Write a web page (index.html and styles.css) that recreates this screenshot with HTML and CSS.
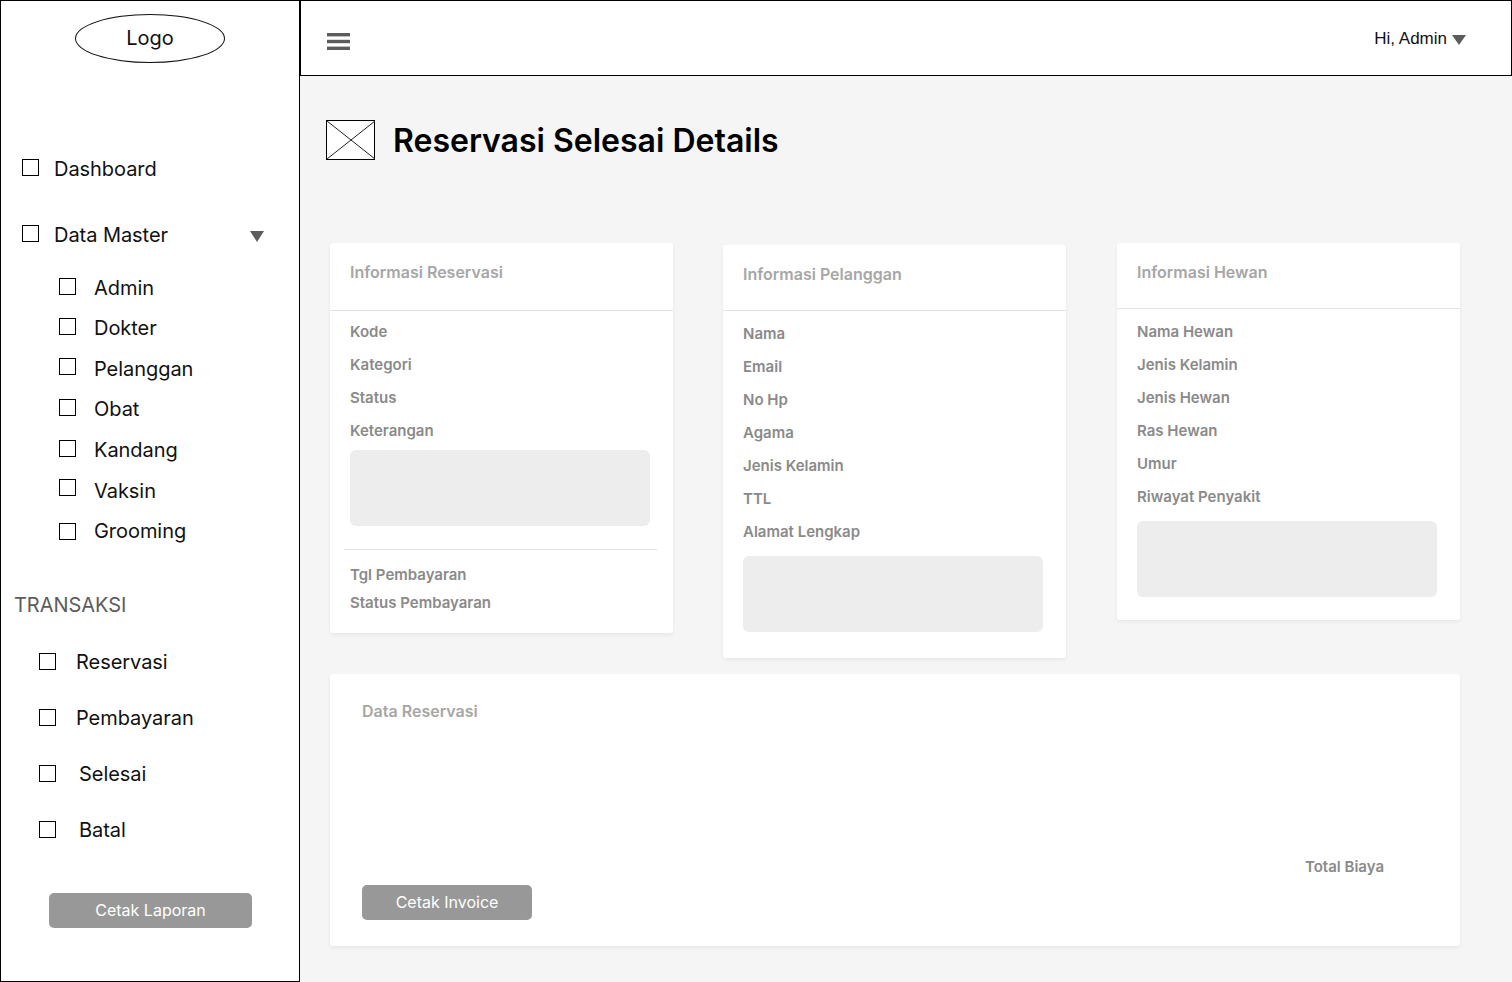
FILE: index.html
```html
<!DOCTYPE html>
<html lang="en">

<head>
    <meta charset="UTF-8">
    <meta name="viewport" content="width=device-width, initial-scale=1.0">
    <title>Reservasi Selesai Details</title>
    <link rel="stylesheet" href="styles.css">
</head>

<body>
    <div class="app">
        <aside class="sidebar">
            <div class="logo">Logo</div>

            <div class="nav-main">
                <div class="nav-row"><span class="box"></span>Dashboard</div>
                <div class="nav-row nav-row-master">
                    <span class="box"></span>Data Master
                    <svg class="caret caret-side" width="14" height="11" viewBox="0 0 14 11"><polygon points="0,0 14,0 7,11" /></svg>
                </div>
            </div>

            <div class="nav-sub">
                <div class="sub-row"><span class="box"></span>Admin</div>
                <div class="sub-row"><span class="box"></span>Dokter</div>
                <div class="sub-row"><span class="box box-up"></span>Pelanggan</div>
                <div class="sub-row"><span class="box"></span>Obat</div>
                <div class="sub-row"><span class="box"></span>Kandang</div>
                <div class="sub-row sub-row-low"><span class="box box-up"></span>Vaksin</div>
                <div class="sub-row"><span class="box box-down"></span>Grooming</div>
            </div>

            <div class="nav-title">TRANSAKSI</div>

            <div class="nav-trans">
                <div class="trans-row"><span class="box"></span>Reservasi</div>
                <div class="trans-row"><span class="box"></span>Pembayaran</div>
                <div class="trans-row trans-row-wide"><span class="box"></span>Selesai</div>
                <div class="trans-row trans-row-wide"><span class="box"></span>Batal</div>
            </div>

            <button class="btn btn-side" type="button">Cetak Laporan</button>
        </aside>

        <div class="content">
            <header class="topbar">
                <svg class="burger" width="23" height="17" viewBox="0 0 23 17">
                    <rect x="0" y="0" width="23" height="3.4" />
                    <rect x="0" y="6.8" width="23" height="3.4" />
                    <rect x="0" y="13.6" width="23" height="3.4" />
                </svg>
                <div class="user">
                    <span>Hi, Admin</span>
                    <svg class="caret" width="14" height="10" viewBox="0 0 14 10"><polygon points="0,0 14,0 7,10" /></svg>
                </div>
            </header>

            <main class="page">
                <div class="page-head">
                    <svg class="placeholder-icon" width="50" height="40" viewBox="0 0 50 40">
                        <rect x="0.5" y="0.5" width="48" height="39" fill="#fff" stroke="#000" />
                        <path d="M1 1 L49 39 M49 1 L1 39" stroke="#222" stroke-width="1" fill="none" />
                    </svg>
                    <h1>Reservasi Selesai Details</h1>
                </div>

                <div class="cards">
                    <section class="card card-reservasi">
                        <h2 class="card-title">Informasi Reservasi</h2>
                        <div class="card-body">
                            <div class="field">Kode</div>
                            <div class="field">Kategori</div>
                            <div class="field">Status</div>
                            <div class="field">Keterangan</div>
                            <div class="textarea"></div>
                            <div class="divider"></div>
                            <div class="field field-small">Tgl Pembayaran</div>
                            <div class="field field-small">Status Pembayaran</div>
                        </div>
                    </section>

                    <section class="card card-pelanggan">
                        <h2 class="card-title">Informasi Pelanggan</h2>
                        <div class="card-body">
                            <div class="field">Nama</div>
                            <div class="field">Email</div>
                            <div class="field">No Hp</div>
                            <div class="field">Agama</div>
                            <div class="field">Jenis Kelamin</div>
                            <div class="field">TTL</div>
                            <div class="field">Alamat Lengkap</div>
                            <div class="textarea"></div>
                        </div>
                    </section>

                    <section class="card card-hewan">
                        <h2 class="card-title">Informasi Hewan</h2>
                        <div class="card-body">
                            <div class="field">Nama Hewan</div>
                            <div class="field">Jenis Kelamin</div>
                            <div class="field">Jenis Hewan</div>
                            <div class="field">Ras Hewan</div>
                            <div class="field">Umur</div>
                            <div class="field">Riwayat Penyakit</div>
                            <div class="textarea"></div>
                        </div>
                    </section>
                </div>

                <section class="card-wide">
                    <h2 class="wide-title">Data Reservasi</h2>
                    <div class="total">Total Biaya</div>
                    <button class="btn btn-invoice" type="button">Cetak Invoice</button>
                </section>
            </main>
        </div>
    </div>
</body>

</html>
```

FILE: styles.css
```css
* {
    box-sizing: border-box;
}

body {
    margin: 0;
    font-family: Inter, "Noto Sans", sans-serif;
    color: #111;
    background-color: #f5f5f5;
}

.app {
    display: flex;
    width: 1512px;
    height: 982px;
    overflow: hidden;
}

/* sidebar */
.sidebar {
    width: 300px;
    height: 982px;
    flex-shrink: 0;
    background-color: #fff;
    border: 1px solid #000;
    font-size: 20px;
    letter-spacing: -0.05px;
}

.logo {
    display: flex;
    align-items: center;
    justify-content: center;
    width: 150px;
    height: 49px;
    margin: 13px 0 0 74px;
    padding-bottom: 2px;
    border: 1px solid #111;
    border-radius: 50%;
}

.box {
    display: block;
    flex-shrink: 0;
    width: 17px;
    height: 17px;
    margin-top: 10px;
    border: 1.3px solid #000;
}

.nav-main {
    margin-top: 86px;
}

.nav-row {
    display: flex;
    gap: 15px;
    height: 40px;
    padding-left: 21px;
    line-height: 40px;
}

.nav-row-master {
    margin-top: 26px;
}

.caret {
    display: block;
    fill: #5c5c5c;
}

.caret-side {
    margin: 16px 35px 0 auto;
}

.nav-sub {
    margin-top: 12.75px;
}

.sub-row {
    display: flex;
    gap: 18px;
    height: 40.5px;
    padding-left: 58px;
    line-height: 40.5px;
}

.sub-row-low {
    line-height: 42px;
}

.box-up {
    margin-top: 9px;
}

.box-down {
    margin-top: 12px;
}

.nav-title {
    margin: 42px 0 0 13px;
    line-height: 24px;
    color: #5c5c5c;
}

.nav-trans {
    display: flex;
    flex-direction: column;
    gap: 16px;
    margin-top: 25px;
}

.trans-row {
    display: flex;
    gap: 20px;
    height: 40px;
    padding-left: 38px;
    line-height: 40px;
}

.trans-row .box {
    margin-top: 11px;
}

.trans-row-wide {
    gap: 23px;
}

.btn {
    display: block;
    height: 35px;
    padding: 0 0 2px;
    border: none;
    border-radius: 5px;
    background-color: #989898;
    color: #fff;
    font-family: inherit;
    font-size: 16px;
    letter-spacing: 0;
}

.btn-side {
    width: 203px;
    margin: 43px 0 0 48px;
}

/* top bar */
.content {
    flex: 1;
    min-width: 0;
}

.topbar {
    display: flex;
    align-items: center;
    justify-content: space-between;
    height: 76px;
    padding: 0 45px 0 26px;
    background-color: #fff;
    border: 1px solid #000;
}

.burger {
    display: block;
    margin-top: 6px;
    fill: #5c5c5c;
}

.user {
    display: flex;
    align-items: center;
    gap: 5px;
    font-family: "Liberation Sans", Arial, sans-serif;
    font-size: 17px;
}

.user span {
    margin-top: 2px;
}

.user .caret {
    margin-top: 4px;
}

/* page */
.page {
    padding-left: 26px;
}

.page-head {
    display: flex;
    align-items: center;
    gap: 17px;
    height: 40px;
    margin-top: 44px;
}

.placeholder-icon {
    display: block;
}

h1 {
    margin: 0;
    font-size: 32px;
    font-weight: 600;
    color: #000;
}

.cards {
    display: flex;
    align-items: flex-start;
    gap: 50px;
    height: 415px;
    margin: 83px 0 0 4px;
}

.card {
    width: 343px;
    background-color: #fff;
    border-radius: 3px;
    box-shadow: 0 2px 4px rgba(0, 0, 0, 0.06);
}

.card-reservasi {
    height: 390px;
}

.card-pelanggan {
    height: 413px;
    margin-top: 2px;
}

.card-hewan {
    height: 377px;
    margin-left: 1px;
}

.card-title {
    height: 66px;
    margin: 0;
    padding: 19px 20px 0;
    border-bottom: 1px solid #e3e3e3;
    font-size: 16px;
    font-weight: 600;
    line-height: 20px;
    color: #a6a6a6;
}

.card-reservasi .card-title {
    height: 68px;
}

.card-body {
    padding: 5.5px 20px 0;
}

.card-reservasi .card-body {
    padding-top: 3.5px;
}

.field {
    height: 33px;
    font-size: 15px;
    font-weight: 600;
    line-height: 33px;
    color: #8a8a8a;
}

.field-small {
    height: 28px;
    line-height: 28px;
}

.textarea {
    width: 300px;
    height: 76px;
    margin-top: 8.5px;
    background-color: #ededed;
    border-radius: 6px;
}

.card-reservasi .textarea {
    margin-top: 3.5px;
}

.divider {
    height: 1px;
    margin: 23px -4px 11px -6px;
    background-color: #e0e0e0;
}

.card-wide {
    width: 1130px;
    height: 272px;
    margin: 16px 0 0 4px;
    padding: 27px 32px 0;
    background-color: #fff;
    border-radius: 3px;
    box-shadow: 0 2px 4px rgba(0, 0, 0, 0.06);
}

.wide-title {
    margin: 0;
    font-size: 16px;
    font-weight: 600;
    line-height: 20px;
    color: #a6a6a6;
}

.total {
    margin-top: 136px;
    padding-right: 44px;
    font-size: 15px;
    font-weight: 600;
    line-height: 20px;
    text-align: right;
    color: #8a8a8a;
}

.btn-invoice {
    width: 170px;
    margin-top: 8px;
}
```
